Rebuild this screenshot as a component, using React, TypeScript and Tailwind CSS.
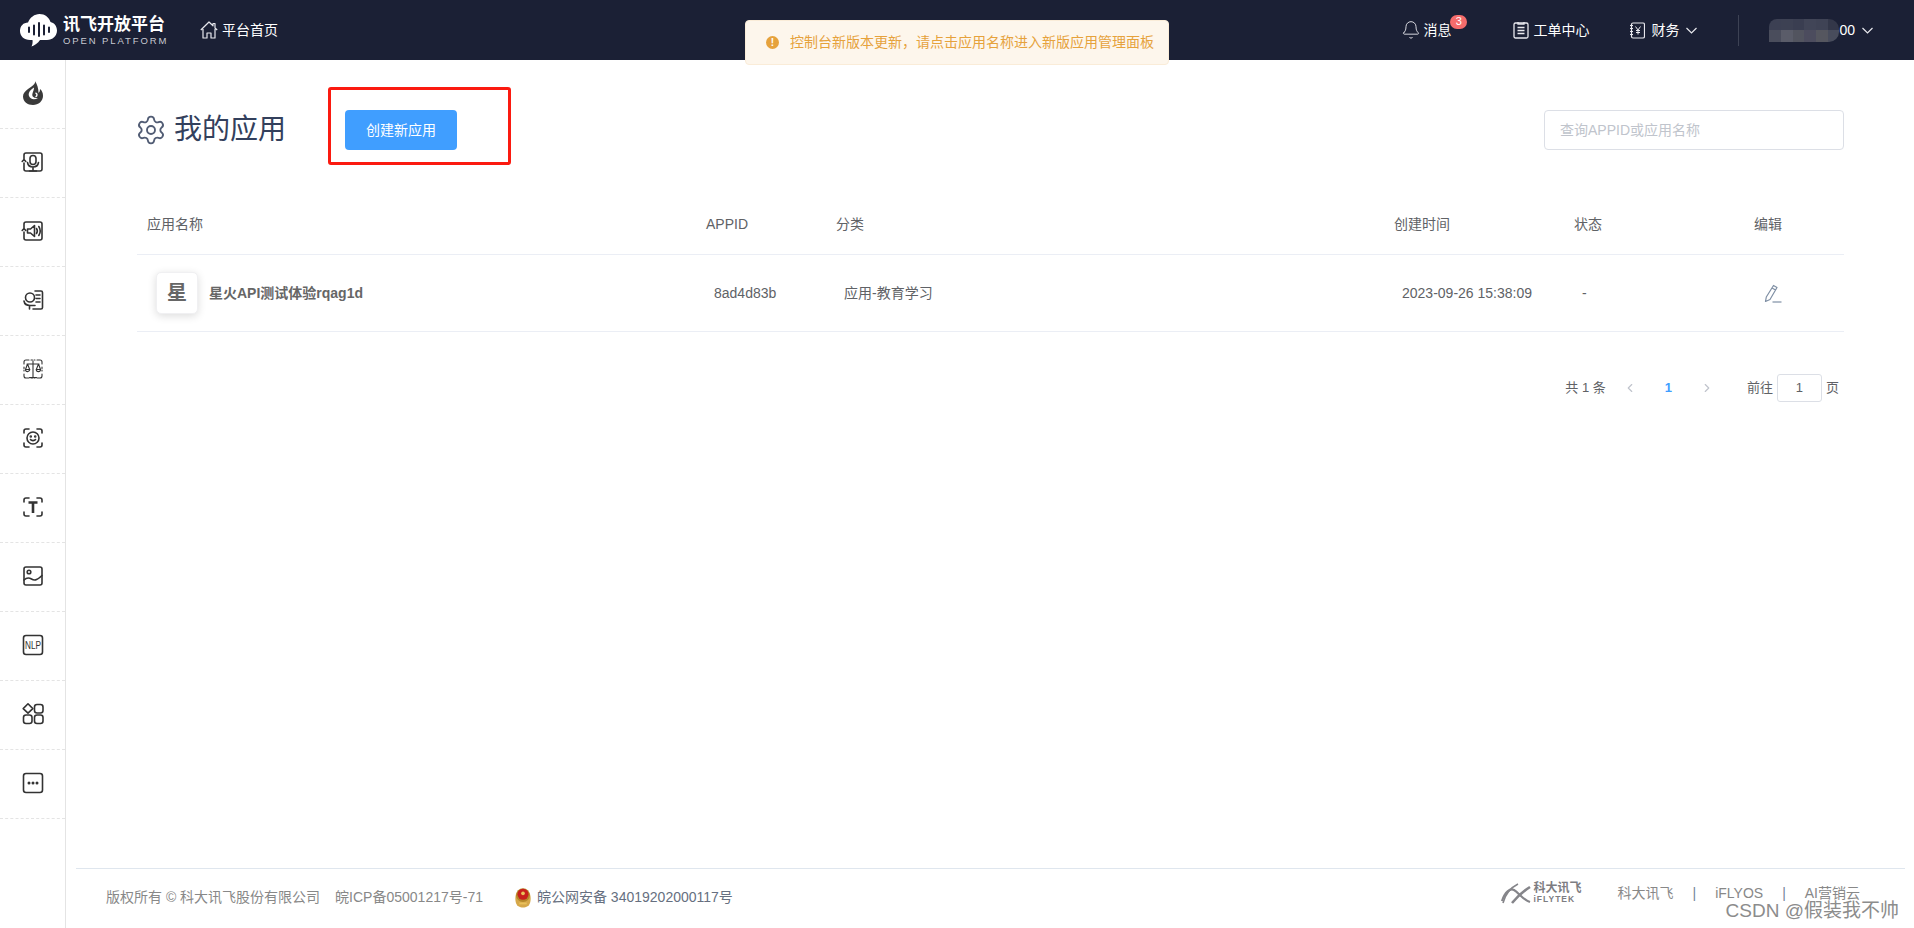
import React from "react";
import { Settings, Bell, ChevronLeft, ChevronRight } from "lucide-react";

const Corners = () => (
  <path d="M3 7V5a2 2 0 0 1 2-2h3M16 3h3a2 2 0 0 1 2 2v2M21 17v2a2 2 0 0 1-2 2h-3M8 21H5a2 2 0 0 1-2-2v-2" />
);
const Ico = ({ children }: { children: React.ReactNode }) => (
  <svg width="24" height="24" viewBox="0 0 24 24" fill="none" stroke="#333" strokeWidth="1.6" strokeLinecap="round" strokeLinejoin="round">
    {children}
  </svg>
);
const RefreshBox = () => (
  <path d="M3 9V5a2 2 0 0 1 2-2h14a2 2 0 0 1 2 2v14a2 2 0 0 1-2 2H5a2 2 0 0 1-2-2v-6M1.2 11.5 3 9.5l1.8 2" />
);
const Caret = () => (
  <svg width="11" height="7" viewBox="0 0 11 7" fill="none" stroke="#e8e8ee" strokeWidth="1.2">
    <path d="M.5 1 5.500 6l5-5" />
  </svg>
);

const sideIcons = [
  <svg width="20" height="24" viewBox="0 0 20 24" key="flame">
    <path d="M12 0C13 3 9 5 5 8 2 10.500 0 12 0 15.500 0 20.500 4.500 24 10 24c5.500 0 10-4 10-9 0-3-1-5.500-3-7 0 2-.5 3-1.500 4C15.500 7 14 3 12 0Z" fill="#3a3a3a" />
    <path d="M11 6.500C7 9 5 12 6 15c1 3 5 4.500 9 2-4 .5-6.500-1.500-5.500-4.500C10 10.500 11 9 11 6.500Z" fill="#fff" />
    <path d="M12.500 12c2 .5 2 3.200 0 3.800" fill="none" stroke="#fff" strokeWidth="1.400" />
  </svg>,
  <Ico key="mic">
    <RefreshBox />
    <rect x="9" y="5.500" width="6" height="9" rx="3" />
    <path d="M6.500 12.500c.5 3 2.800 4.500 5.500 4.500s5-1.500 5.500-4.500M12 17v4M8.500 21h7" />
  </Ico>,
  <Ico key="speaker">
    <RefreshBox />
    <path d="M6.500 10h3l4-3.500v11l-4-3.500h-3Z" />
    <path d="M15.500 9.500c1 1.500 1 3.500 0 5M17.800 7.500c1.800 2.800 1.800 6.200 0 9" />
  </Ico>,
  <Ico key="person">
    <path d="M14 3h6a1.500 1.500 0 0 1 1.500 1.500v15A1.500 1.500 0 0 1 20 21h-8" />
    <circle cx="9" cy="9.500" r="4.500" />
    <path d="M3 13c.5 3 3 4.500 6 4.500h5M8.500 17.500V21M15 7h4M15 10.500h4M15 14h4" />
  </Ico>,
  <Ico key="scale">
    <g strokeWidth="1.100">
      <Corners />
      <path d="M10 3h4M3 10v4M21 10v4M10 21h4" strokeDasharray="1.500 1.500" />
      <path d="M12 4v16M8.500 20.500h7M6 7h12M6.500 7 4.500 12.500M6.500 7l2.200 5.500M17.500 7l-2.200 5.500M17.500 7l2 5.500" />
      <path d="M4.500 12.500a2.100 2.100 0 0 0 4.200 0ZM15.300 12.500a2.100 2.100 0 0 0 4.200 0Z" />
    </g>
  </Ico>,
  <Ico key="face">
    <Corners />
    <circle cx="12" cy="12" r="6" />
    <path d="M9.500 13.500c1 1.500 4 1.500 5 0" />
    <circle cx="9.800" cy="10.500" r=".5" fill="#333" />
    <circle cx="14.200" cy="10.500" r=".5" fill="#333" />
  </Ico>,
  <Ico key="text">
    <Corners />
    <path d="M7.500 7.500h9M12 7.500V18" strokeWidth="2.600" strokeLinecap="butt" />
  </Ico>,
  <Ico key="image">
    <rect x="3" y="3" width="18" height="18" rx="2" />
    <circle cx="8" cy="8" r="1.800" />
    <path d="M3 16c3-3 5-2.500 7.500-1s5 2 10.500-3.500" />
  </Ico>,
  <svg width="24" height="24" viewBox="0 0 24 24" key="nlp">
    <rect x="2.500" y="2.500" width="19" height="19" rx="2.500" fill="none" stroke="#333" strokeWidth="1.600" />
    <text x="12" y="16" textAnchor="middle" fontSize="10.500" fill="#333" fontFamily="'Liberation Sans Narrow','Liberation Sans',sans-serif" textLength="16" lengthAdjust="spacingAndGlyphs">NLP</text>
  </svg>,
  <Ico key="apps">
    <path d="M7 1.800 11.800 6.600 7 11.200 2.200 6.600Z" />
    <rect x="13.500" y="2.500" width="8.500" height="8.500" rx="2.500" />
    <rect x="2.500" y="13" width="8.500" height="8.500" rx="2.500" />
    <rect x="13.500" y="13" width="8.500" height="8.500" rx="2.500" />
  </Ico>,
  <Ico key="more">
    <rect x="2.500" y="2.500" width="19" height="19" rx="2.500" />
    <circle cx="8" cy="12" r=".7" fill="#333" />
    <circle cx="12" cy="12" r=".7" fill="#333" />
    <circle cx="16" cy="12" r=".7" fill="#333" />
  </Ico>,
];

const blurTop = ["bg-[#3c4053]", "bg-[#3d4153]", "bg-[#3a3e51]", "bg-[#414557]", "bg-[#3f4355]", "bg-[#333749]"];
const blurBottom = ["bg-[#4a4d5c]", "bg-[#5a5c69]", "bg-[#52545f]", "bg-[#4c4c5e]", "bg-[#55565f]", "bg-[#484c5c]"];

const Logo = () => (
  <svg width="37" height="33" viewBox="0 0 37 33">
    <path d="M10 26C4 26 0 22 0 17s3.500-8.500 8-8.500C10 3.500 14.500 0 19.500 0c5.500 0 9.500 3.500 11 8 3.500.8 6.500 4 6.500 8.500 0 5.500-4.500 9.500-10 9.500H20c-2 3-5.500 5.500-8.500 6.500 1-2 1.300-4.500 1-6.500Z" fill="#fff" />
    <g stroke="#1b2035" strokeWidth="2" strokeLinecap="round">
      <path d="M9 13.500v4.500M14 11.500v9M19 9v13M24 11.500v9M29 13.500v4.500" />
    </g>
  </svg>
);

export default function App() {
  return (
    <div className="relative flex h-[928px] w-[1914px] flex-col overflow-hidden bg-white font-['Liberation_Sans','Noto_Sans_CJK_SC',sans-serif] text-[14px] text-[#606266]">
      <header className="flex h-[60px] shrink-0 items-center bg-[#1b2035] pl-[20px] pr-[41px] text-white">
        <Logo />
        <div className="ml-[6px] flex w-[102px] flex-col">
          <span className="whitespace-nowrap text-[17px] font-bold leading-[20px]">讯飞开放平台</span>
          <span className="whitespace-nowrap text-[9.500px] leading-[11px] tracking-[1.900px] text-[#c8cad2]">OPEN PLATFORM</span>
        </div>
        <svg className="ml-[35px]" width="18" height="18" viewBox="0 0 18 18" fill="none" stroke="#e8e8ee" strokeWidth="1.200" strokeLinejoin="round">
          <path d="M.8 9 9 1l4 3.800V2.500h2V7l2.200 2M3 8v9h4v-5h4v5h4V8" />
        </svg>
        <span className="ml-[4px]">平台首页</span>

        <div className="ml-auto flex items-center">
          <Bell size={20} strokeWidth={1.1} className="text-[#e8e8ee]" />
          <div className="relative ml-[2px]">
            <span>消息</span>
            <span className="absolute left-[27px] top-[-5px] flex h-[14px] w-[17px] items-center justify-center rounded-full bg-[#f56c6c] text-[11px] leading-none">3</span>
          </div>
          <svg className="ml-[62px]" width="16" height="18" viewBox="0 0 16 18" fill="none" stroke="#e8e8ee" strokeWidth="1.300">
            <rect x="1" y="2" width="14" height="15" rx="1.500" />
            <path d="M5 1v2h6V1M4.500 6.500h7M4.500 9.500h7M4.500 12.500h7" />
          </svg>
          <span className="ml-[4px]">工单中心</span>
          <svg className="ml-[41px]" width="15" height="17" viewBox="0 0 15 17" fill="none" stroke="#e8e8ee" strokeWidth="1.200">
            <rect x="1.500" y="1" width="13" height="15" rx="1.500" />
            <path d="M0 3.500h3M0 6.500h3M0 9.500h3M0 12.500h3" />
            <path d="M5.500 4.500 8 8l2.500-3.500M8 8v4.500M6 8.500h4M6 10.500h4" strokeWidth="1" />
          </svg>
          <span className="ml-[6px]">财务</span>
          <span className="ml-[7px] flex"><Caret /></span>
          <div className="ml-[41px] h-[31px] w-px bg-[#3d4254]" />
          <div className="ml-[30px] flex h-[23px] w-[70px] flex-col overflow-hidden rounded-r-[10px] rounded-tl-[8px]">
            <div className="flex flex-1">
              {blurTop.map((c, i) => (
                <div key={i} className={`flex-1 ${c}`} />
              ))}
            </div>
            <div className="flex flex-1">
              {blurBottom.map((c, i) => (
                <div key={i} className={`flex-1 ${c}`} />
              ))}
            </div>
          </div>
          <span>00</span>
          <span className="ml-[7px] flex"><Caret /></span>
        </div>
      </header>

      <div className="absolute left-[745px] top-[20px] z-10 flex h-[45px] w-[424px] items-center rounded-[4px] border border-[#faecd8] bg-[#fdf6ec] pl-[20px] text-[#e6a23c]">
        <span className="flex h-[13px] w-[13px] items-center justify-center rounded-full bg-[#e6a23c] text-[10px] font-bold leading-none text-white">!</span>
        <span className="ml-[11px] whitespace-nowrap">控制台新版本更新，请点击应用名称进入新版应用管理面板</span>
      </div>

      <div className="flex min-h-0 flex-1">
        <aside className="w-[66px] shrink-0 border-r border-[#e4e4e4]">
          {sideIcons.map((icon, i) => (
            <div key={i} className="flex h-[69px] items-center justify-center border-b border-dashed border-[#e4e4e4] pb-[2px]">
              {icon}
            </div>
          ))}
        </aside>

        <main className="flex min-w-0 flex-1 flex-col">
          <div className="flex flex-1 flex-col pl-[71px] pr-[70px] pt-[50px]">
            <div className="flex h-[40px] items-center">
              <Settings size={32} strokeWidth={1.4} className="-ml-[2px] text-[#515c74]" />
              <h1 className="ml-[7px] text-[28px] leading-[40px] text-[#33405c]">我的应用</h1>
              <div className="relative ml-[59px]">
                <button className="h-[40px] w-[112px] rounded-[4px] bg-[#409eff] text-white">创建新应用</button>
                <div className="absolute left-[-17px] top-[-23px] h-[78px] w-[183px] rounded-[3px] border-[3px] border-[#fb1a10]" />
              </div>
              <div className="ml-auto flex h-[40px] w-[300px] items-center rounded-[4px] border border-[#dcdfe6] bg-white pl-[15px] text-[#c0c4cc]">
                查询APPID或应用名称
              </div>
            </div>

            <div className="mt-[44px]">
              <div className="grid h-[61px] grid-cols-[558px_131px_558px_180px_180px_100px] items-center border-b border-[#ebeef5]">
                <div className="pl-[10px]">应用名称</div>
                <div className="pl-[11px]">APPID</div>
                <div className="pl-[10px]">分类</div>
                <div className="pl-[10px]">创建时间</div>
                <div className="pl-[10px]">状态</div>
                <div className="pl-[10px]">编辑</div>
              </div>
              <div className="grid h-[77px] grid-cols-[558px_131px_558px_180px_180px_100px] items-center border-b border-[#ebeef5]">
                <div className="flex items-center pl-[19px]">
                  <div className="flex h-[42px] w-[42px] items-center justify-center rounded-[5px] border border-[#f0f0f2] bg-white text-[20px] font-bold text-[#666] shadow-[0_2px_8px_rgba(0,0,0,0.14)]">星</div>
                  <span className="ml-[11px] font-bold text-[#666]">星火API测试体验rqag1d</span>
                </div>
                <div className="pl-[19px]">8ad4d83b</div>
                <div className="pl-[18px]">应用-教育学习</div>
                <div className="pl-[18px]">2023-09-26 15:38:09</div>
                <div className="pl-[18px]">-</div>
                <div className="pl-[20px]">
                  <svg width="18" height="19" viewBox="0 0 18 19" fill="none" stroke="#7f8fa4" strokeWidth="1.200" strokeLinejoin="round">
                    <path d="M9.500 1.500 13 3.500 6 15.500l-4.500 2 .8-4.500ZM8 4l3.500 2" />
                    <path d="M8.500 18h9" />
                  </svg>
                </div>
              </div>
            </div>

            <div className="mt-[42px] flex h-[28px] items-center justify-end pr-[5px] text-[13px]">
              <span>共 1 条</span>
              <ChevronLeft size={14} strokeWidth={2} className="ml-[17px] text-[#c0c4cc]" />
              <span className="ml-[28px] font-bold text-[#409eff]">1</span>
              <ChevronRight size={14} strokeWidth={2} className="ml-[28px] text-[#c0c4cc]" />
              <span className="ml-[33px]">前往</span>
              <div className="ml-[4px] flex h-[28px] w-[45px] items-center justify-center rounded-[3px] border border-[#dcdfe6]">1</div>
              <span className="ml-[4px]">页</span>
            </div>
          </div>

          <footer className="ml-[10px] mr-[9px] flex h-[60px] shrink-0 justify-between border-t border-[#dfe6ee]">
            <div className="flex items-center self-start pl-[30px] pt-[16px] text-[#888]">
              <span>版权所有 © 科大讯飞股份有限公司</span>
              <span className="ml-[15px]">皖ICP备05001217号-71</span>
              <svg className="ml-[31px]" width="18" height="24" viewBox="0 0 18 26">
                <path d="M2 8c-2 5-2 12 2 15 3 2 7 2 10 0 4-3 4-10 2-15" fill="#d6a84a" />
                <circle cx="9" cy="11" r="7.500" fill="#b5882a" />
                <circle cx="9" cy="10" r="6" fill="#c8201c" />
                <circle cx="9" cy="9" r="2" fill="#e9c15a" />
                <path d="M5 20h8" stroke="#e9c15a" strokeWidth="2" />
              </svg>
              <span className="ml-[5px] text-[#666f80]">皖公网安备 34019202000117号</span>
            </div>
            <div className="relative flex items-center self-start pr-[45px] pt-[14px] text-[#888]">
              <svg width="32" height="21" viewBox="0 0 32 21" fill="none" stroke="#85858a" strokeWidth="1.600">
                <path d="M3 20C5 12 10 5 18 1" />
                <path d="M2 18c3-9 8-13 12-11 5 3 8 9 16 12" strokeWidth="2.200" />
                <path d="M12 20c5-6 10-11 18-16" strokeWidth="2.600" />
              </svg>
              <div className="ml-[2px] flex w-[49px] flex-col text-[#7d7d82]">
                <span className="whitespace-nowrap text-[12px] font-bold leading-[11px]">科大讯飞</span>
                <span className="whitespace-nowrap text-[8.500px] font-bold leading-[10px] tracking-[1px]">iFLYTEK</span>
              </div>
              <span className="ml-[35px]">科大讯飞</span>
              <span className="ml-[19px] text-[#73839a]">|</span>
              <span className="ml-[19px]">iFLYOS</span>
              <span className="ml-[19px] text-[#73839a]">|</span>
              <span className="ml-[19px]">AI营销云</span>
              <span className="absolute right-[6px] top-[30px] whitespace-nowrap text-[19px] leading-[24px] text-[#8c8c8c] [text-shadow:0_0_2px_#fff]">CSDN @假装我不帅</span>
            </div>
          </footer>
        </main>
      </div>
    </div>
  );
}
